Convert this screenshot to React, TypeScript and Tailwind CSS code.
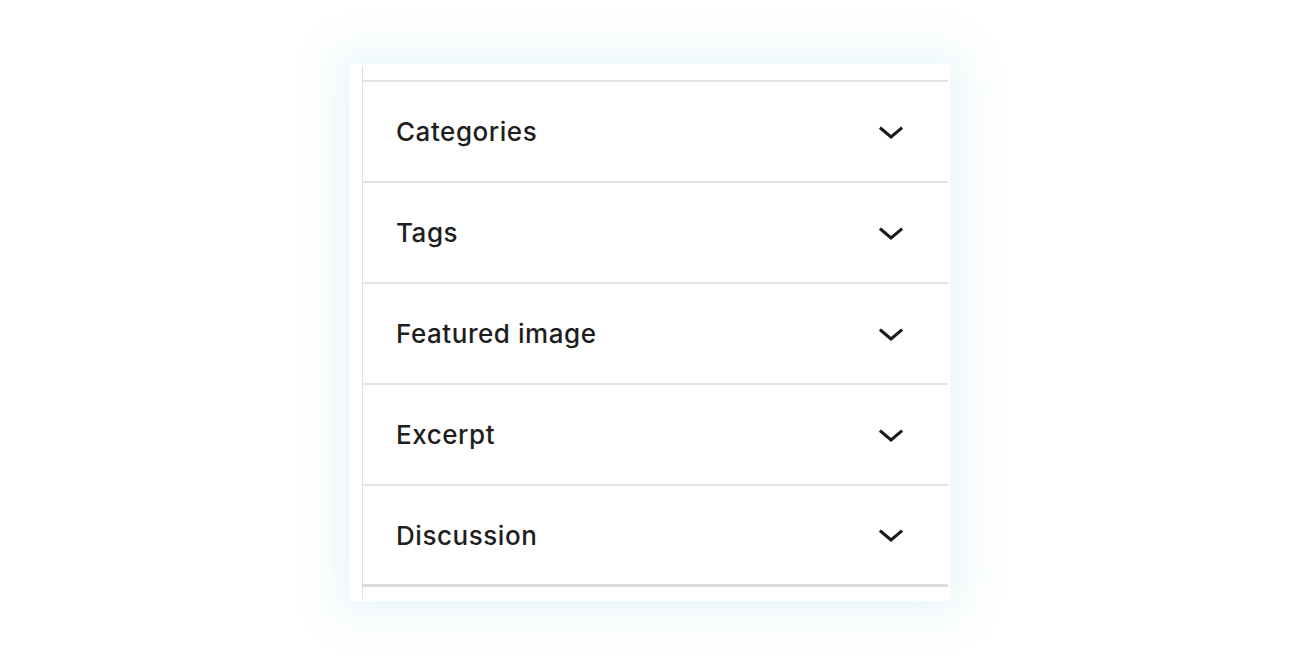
import React from "react";

const items = ["Categories", "Tags", "Featured image", "Excerpt", "Discussion"];

function Chevron() {
  return (
    <svg width="26" height="16" viewBox="0 0 26 16" fill="none" aria-hidden="true">
      <path d="M3 4.5L13 13L23 4.5" stroke="#1a1a1a" strokeWidth="3" strokeLinecap="square" strokeLinejoin="miter" />
    </svg>
  );
}

export default function App() {
  return (
    <div className="w-[1300px] h-[665px] bg-white flex items-center justify-center" style={{ fontFamily: "Inter, 'Noto Sans', sans-serif" }}>
      <div className="w-[600px] h-[537px] bg-white flex pl-[12px] pr-[2px] shadow-[0_0_40px_12px_rgba(120,200,215,0.17)]">
        <div className="flex-1 flex flex-col border-l border-[#dedede] mt-[2px] mb-[2px]">
          <div className="h-[16px] border-b-2 border-[#e2e2e2]"></div>
          {items.map((label, i) => (
            <div
              key={label}
              className={
                i === items.length - 1
                  ? "h-[101px] flex items-center justify-between pl-[33px] pr-[44px] border-b-[3px] border-[#dcdcdc]"
                  : "h-[101px] flex items-center justify-between pl-[33px] pr-[44px] border-b-2 border-[#e2e2e2]"
              }
            >
              <span className="text-[26px] font-medium text-[#1e1e1e] tracking-[0.55px]">{label}</span>
              <Chevron />
            </div>
          ))}
          <div className="flex-1"></div>
        </div>
      </div>
    </div>
  );
}
